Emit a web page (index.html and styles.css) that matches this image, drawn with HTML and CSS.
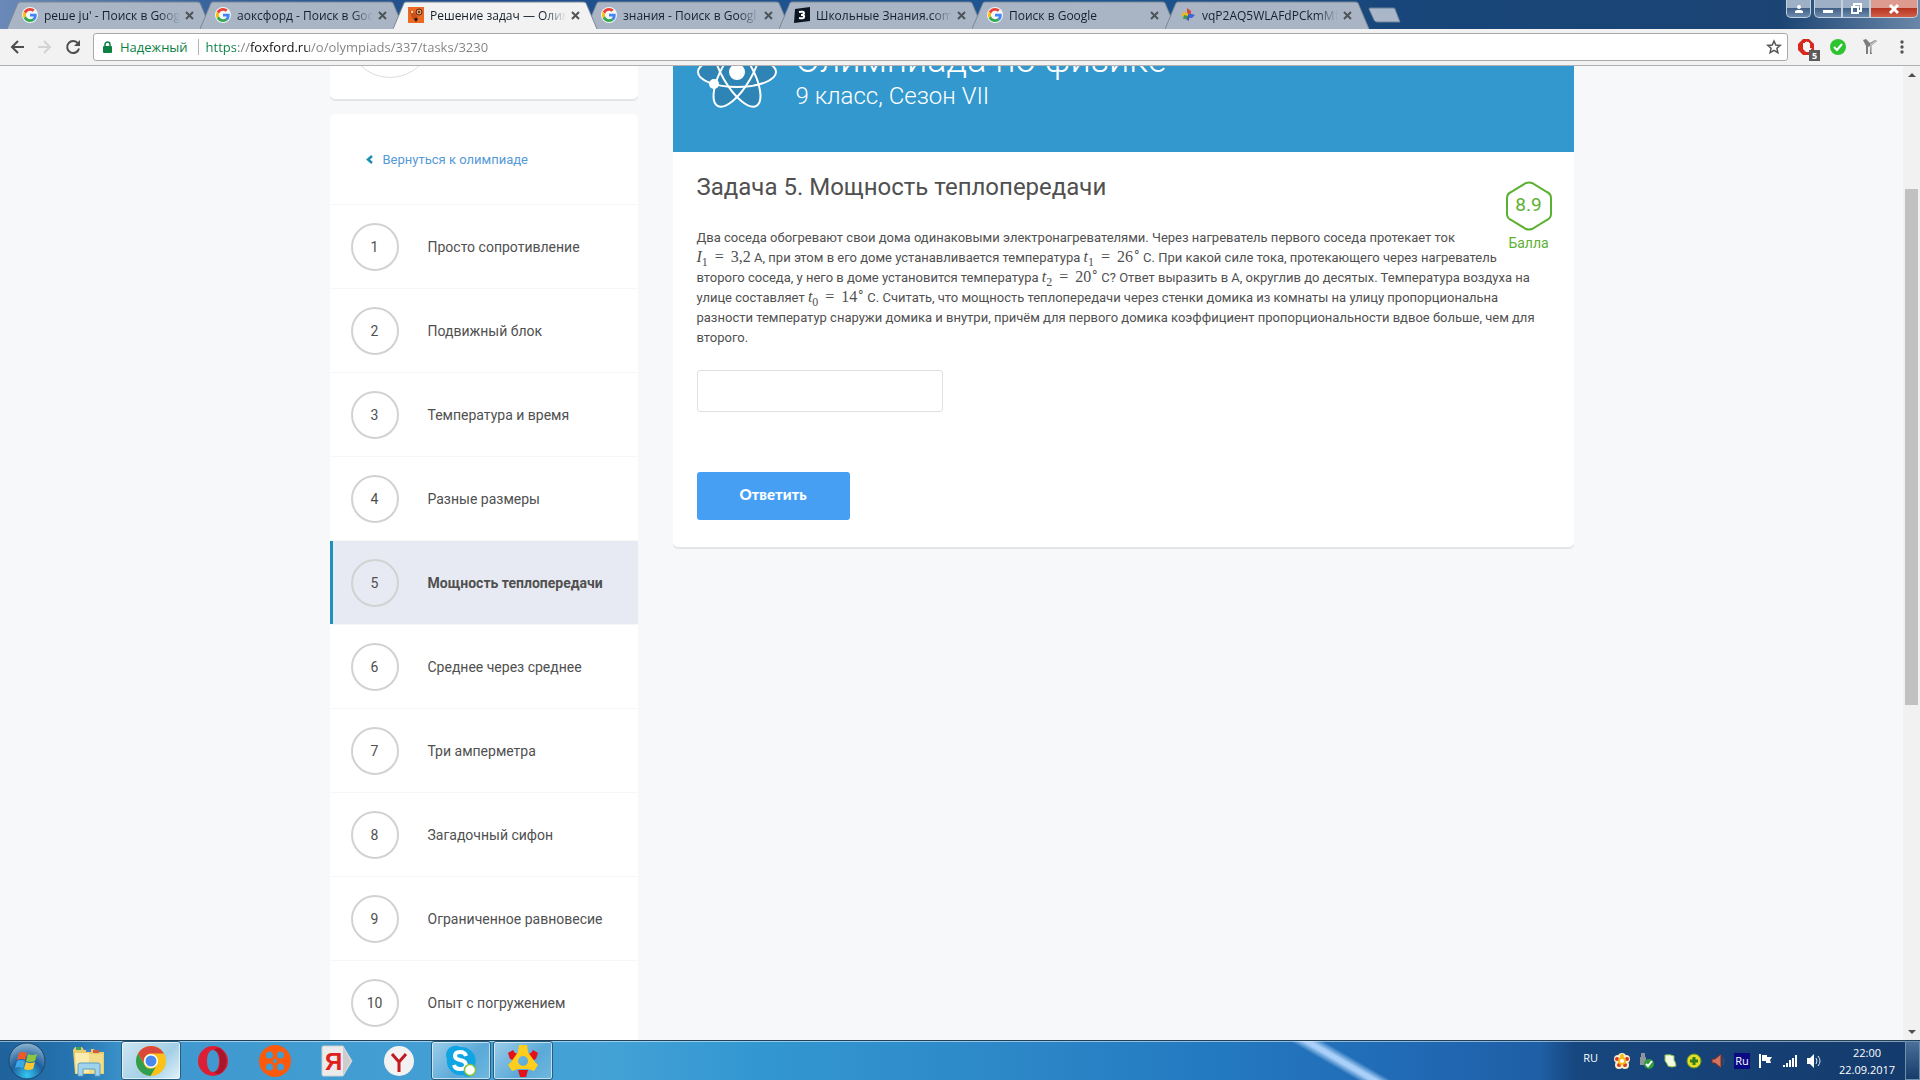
FILE: index.html
```html
<!DOCTYPE html>
<html lang="ru">
<head>
  <meta charset="UTF-8" />
  <meta name="viewport" content="width=device-width, initial-scale=1.0"/>
  <title>Решение задач — Олимпиада по физике</title>
  <link rel="stylesheet" href="styles.css">
</head>
<body>
  <!-- shared shapes -->
  <svg class="defs" aria-hidden="true">
    <symbol id="google" viewBox="0 0 48 48">
      <circle cx="24" cy="24" r="24" fill="#f4f6f8"/>
      <g transform="translate(3 3) scale(.875)">
        <path fill="#ea4335" d="M24 9.500c3.540 0 6.710 1.220 9.210 3.600l6.850-6.850C35.900 2.380 30.470 0 24 0 14.620 0 6.510 5.380 2.560 13.220l7.980 6.190C12.430 13.720 17.740 9.500 24 9.500z"/>
        <path fill="#4285f4" d="M46.980 24.550c0-1.570-.15-3.090-.38-4.550H24v9.020h12.940c-.58 2.960-2.260 5.480-4.780 7.180l7.730 6c4.510-4.180 7.090-10.360 7.090-17.650z"/>
        <path fill="#fbbc05" d="M10.530 28.590c-.48-1.450-.76-2.990-.76-4.590s.27-3.140.76-4.590l-7.980-6.190C.92 16.460 0 20.120 0 24c0 3.880.92 7.540 2.560 10.780l7.970-6.190z"/>
        <path fill="#34a853" d="M24 48c6.480 0 11.930-2.130 15.890-5.810l-7.730-6c-2.150 1.450-4.920 2.300-8.160 2.300-6.260 0-11.570-4.220-13.470-9.910l-7.980 6.190C6.510 42.620 14.620 48 24 48z"/>
      </g>
    </symbol>
    <symbol id="tab-shape" viewBox="0 0 205 28" preserveAspectRatio="none">
      <path d="M0 28 L11 2 Q12 1 13 1 H190 Q192 1 193 2 L204 28" fill="currentColor" stroke="#7b8794"/>
    </symbol>
    <symbol id="cross" viewBox="0 0 9 9">
      <path d="M1 1 8 8M8 1 1 8" stroke="#4f545a" stroke-width="2" fill="none"/>
    </symbol>
    <symbol id="gear" viewBox="0 0 32 32">
      <g fill="#e3121a">
        <path d="M1 8 6 5l2 3 4 1-4 7-5-2z"/><path d="M31 8l-5-3-2 3-4 1 4 7 5-2z"/><path d="M11 25h10l-2 7h-6z"/>
      </g>
      <path fill="#ffcd1c" fill-rule="evenodd" d="M12 0h8l1 7 7 10 3 3-4 6-6-2h-10l-6 2-4-6 3-3 7-10zM16 11a5 5 0 1 0 0 10 5 5 0 0 0 0-10z"/>
    </symbol>
  </svg>

  <header class="titlebar">
    <div class="tabs" role="tablist">
      <div class="tab" role="tab">
        <svg class="tab-bg"><use href="#tab-shape"/></svg>
        <svg class="favicon"><use href="#google"/></svg>
        <span class="tab-title">реше ju' - Поиск в Goog</span>
        <button class="tab-close" aria-label="Закрыть"><svg><use href="#cross"/></svg></button>
      </div>
      <div class="tab" role="tab">
        <svg class="tab-bg"><use href="#tab-shape"/></svg>
        <svg class="favicon"><use href="#google"/></svg>
        <span class="tab-title">аоксфорд - Поиск в Goo</span>
        <button class="tab-close" aria-label="Закрыть"><svg><use href="#cross"/></svg></button>
      </div>
      <div class="tab active" role="tab" aria-selected="true">
        <svg class="tab-bg"><use href="#tab-shape"/></svg>
        <svg class="favicon" viewBox="0 0 16 16">
          <rect width="16" height="16" fill="#ea6a24"/>
          <path d="M1 3l6 3 3 4-2 5-4-4z" fill="#c9501a"/>
          <circle cx="4" cy="5" r="1" fill="#fff"/>
          <circle cx="11" cy="5" r="3" fill="#f09a63" stroke="#4a2a18"/>
          <circle cx="11" cy="5" r="1" fill="#2b1a12"/>
          <path d="M6 12l2 3 2-3-1-1H7z" fill="#2b1a12"/>
        </svg>
        <span class="tab-title">Решение задач — Олим</span>
        <button class="tab-close" aria-label="Закрыть"><svg><use href="#cross"/></svg></button>
      </div>
      <div class="tab" role="tab">
        <svg class="tab-bg"><use href="#tab-shape"/></svg>
        <svg class="favicon"><use href="#google"/></svg>
        <span class="tab-title">знания - Поиск в Googl</span>
        <button class="tab-close" aria-label="Закрыть"><svg><use href="#cross"/></svg></button>
      </div>
      <div class="tab" role="tab">
        <svg class="tab-bg"><use href="#tab-shape"/></svg>
        <svg class="favicon" viewBox="0 0 16 16">
          <path d="M1 2 16 0v14L0 16z" fill="#0b1522"/>
          <path d="M5 5q5-1 5 1 0 2-3 2 4 0 3 2 0 2-5 1" fill="none" stroke="#fff" stroke-width="2"/>
        </svg>
        <span class="tab-title">Школьные Знания.com</span>
        <button class="tab-close" aria-label="Закрыть"><svg><use href="#cross"/></svg></button>
      </div>
      <div class="tab" role="tab">
        <svg class="tab-bg"><use href="#tab-shape"/></svg>
        <svg class="favicon"><use href="#google"/></svg>
        <span class="tab-title">Поиск в Google</span>
        <button class="tab-close" aria-label="Закрыть"><svg><use href="#cross"/></svg></button>
      </div>
      <div class="tab" role="tab">
        <svg class="tab-bg"><use href="#tab-shape"/></svg>
        <svg class="favicon" viewBox="0 0 16 16">
          <path d="M7 1l4 3v4H7z" fill="#d8453a"/><path d="M15 8l-3 3H8V7h4z" fill="#3c68d8"/>
          <path d="M9 14l-3-2-1-4h4z" fill="#4b46c8"/><path d="M1 9l2-4 5 1v3z" fill="#e8b92b"/>
          <path d="M3 12l1-4 4 1-1 3z" fill="#3f9a4e"/>
        </svg>
        <span class="tab-title">vqP2AQ5WLAFdPCkmMf</span>
        <button class="tab-close" aria-label="Закрыть"><svg><use href="#cross"/></svg></button>
      </div>
    </div>
    <button class="new-tab" aria-label="Новая вкладка">
      <svg viewBox="0 0 34 16"><path d="M1 2Q1 1 2 1H25Q27 1 27 2L32 15H9Q7 15 6 13Z" fill="#a9b7c8" stroke="#6b8099"/></svg>
    </button>
    <div class="window-buttons">
      <button class="win user" aria-label="Пользователь">
        <svg viewBox="0 0 12 12"><circle cx="6" cy="4" r="2" fill="#fff"/><path d="M2 10V8l2-1h4l2 1v2z" fill="#fff"/></svg>
      </button>
      <div class="win-group">
        <button class="win" aria-label="Свернуть">
          <svg viewBox="0 0 12 12"><rect x="1" y="7" width="10" height="3" fill="#fff"/></svg>
        </button>
        <button class="win" aria-label="Восстановить">
          <svg viewBox="0 0 12 12"><path d="M4 3V1h7v7H9M2 4h6v6H2z" fill="none" stroke="#fff" stroke-width="2"/></svg>
        </button>
        <button class="win close" aria-label="Закрыть окно">
          <svg viewBox="0 0 12 12"><path d="M2 2l8 8M10 2 2 10" stroke="#fff" stroke-width="3"/></svg>
        </button>
      </div>
    </div>
  </header>

  <nav class="toolbar">
    <button class="nav-btn" aria-label="Назад">
      <svg viewBox="0 0 16 16"><path d="M15 8H3M9 2 3 8l6 6" fill="none" stroke="#4d4d4d" stroke-width="2"/></svg>
    </button>
    <button class="nav-btn" aria-label="Вперёд" disabled>
      <svg viewBox="0 0 16 16"><path d="M1 8h12M7 2l6 6-6 6" fill="none" stroke="#d3d3d3" stroke-width="2"/></svg>
    </button>
    <button class="nav-btn" aria-label="Обновить">
      <svg viewBox="0 0 16 16"><path d="M13 4.500A6 6 0 1 0 14 9.500" fill="none" stroke="#4d4d4d" stroke-width="2"/><path d="M15 1v6H9z" fill="#4d4d4d"/></svg>
    </button>
    <div class="omnibox">
      <svg class="lock" viewBox="0 0 9 12"><path d="M2 6V3.500a2.500 2.500 0 0 1 5 0V6" fill="none" stroke="#0b8043" stroke-width="1.500"/><rect y="5" width="9" height="7" rx="1" fill="#0b8043"/></svg>
      <label class="secure" for="url">Надежный</label>
      <input class="url" id="url" type="text" value="https://foxford.ru/o/olympiads/337/tasks/3230">
      <button class="star" aria-label="Добавить в закладки">
        <svg viewBox="0 0 16 16"><path d="M8 2l1.800 4 4.400.4-3.300 2.900 1 4.300L8 11.300l-3.900 2.300 1-4.300L1.800 6.400 6.200 6z" fill="none" stroke="#555" stroke-width="1.500"/></svg>
      </button>
    </div>
    <button class="ext" aria-label="Блокировщик">
      <svg viewBox="0 0 16 16"><path d="M5 0h6l5 5v6l-5 5H5l-5-5V5z" fill="#d8281e"/><path d="M5 4v6l3 3h3l3-4-2 0V4h-1v4V3H9v5V2.500H8V8V3H7v5V4z" fill="#f4f4f4"/></svg>
      <span class="ext-badge">5</span>
    </button>
    <button class="ext" aria-label="Проверка">
      <svg viewBox="0 0 16 16"><circle cx="8" cy="8" r="8" fill="#2fc32f"/><path d="M4 8l3 3 5-6" fill="none" stroke="#fff" stroke-width="2"/></svg>
    </button>
    <button class="ext" aria-label="Расширение">
      <svg viewBox="0 0 16 16"><path d="M1 1l3-1 4 4 5-3 2 1-5 4v9H8V7L6 8v7H4V7z" fill="#7c7c7c"/><path d="M8 5l6-4 1 1-5 4v8H9z" fill="#bdbdbd"/></svg>
    </button>
    <button class="ext menu" aria-label="Меню">
      <svg viewBox="0 0 16 16"><circle cx="8" cy="3" r="1.700" fill="#555"/><circle cx="8" cy="8" r="1.700" fill="#555"/><circle cx="8" cy="13" r="1.700" fill="#555"/></svg>
    </button>
  </nav>

  <div class="viewport">
    <div class="page">
      <aside class="sidebar">
        <div class="card profile"><div class="avatar"></div></div>
        <div class="card">
          <a class="back" href="#">
            <svg viewBox="0 0 7 9"><path d="M6 1 2 4.500 6 8" fill="none" stroke="#1c8db5" stroke-width="2.500"/></svg>
            Вернуться к олимпиаде
          </a>
          <ul class="tasks">
            <li><a href="#"><span class="num">1</span>Просто сопротивление</a></li>
            <li><a href="#"><span class="num">2</span>Подвижный блок</a></li>
            <li><a href="#"><span class="num">3</span>Температура и время</a></li>
            <li><a href="#"><span class="num">4</span>Разные размеры</a></li>
            <li class="current"><a href="#"><span class="num">5</span>Мощность теплопередачи</a></li>
            <li><a href="#"><span class="num">6</span>Среднее через среднее</a></li>
            <li><a href="#"><span class="num">7</span>Три амперметра</a></li>
            <li><a href="#"><span class="num">8</span>Загадочный сифон</a></li>
            <li><a href="#"><span class="num">9</span>Ограниченное равновесие</a></li>
            <li><a href="#"><span class="num">10</span>Опыт с погружением</a></li>
          </ul>
        </div>
      </aside>

      <main class="card content">
        <div class="hero">
          <svg class="atom" viewBox="0 0 80 84">
            <g fill="#2d84b5">
              <ellipse cx="40" cy="42" rx="39" ry="15"/>
              <ellipse cx="40" cy="42" rx="39" ry="15" transform="rotate(60 40 42)"/>
              <ellipse cx="40" cy="42" rx="39" ry="15" transform="rotate(120 40 42)"/>
            </g>
            <g fill="none" stroke="#fff" stroke-width="2">
              <ellipse cx="40" cy="42" rx="39" ry="15"/>
              <ellipse cx="40" cy="42" rx="39" ry="15" transform="rotate(60 40 42)"/>
              <ellipse cx="40" cy="42" rx="39" ry="15" transform="rotate(120 40 42)"/>
            </g>
            <circle cx="40" cy="42" r="8" fill="#fff"/>
            <circle cx="17" cy="54" r="5" fill="#fff"/>
          </svg>
          <div class="hero-text">
            <h1>Олимпиада по физике</h1>
            <p>9 класс, Сезон VII</p>
          </div>
        </div>
        <div class="task">
          <div class="score">
            <div class="hexagon">
              <svg viewBox="0 0 46 50"><path d="M20 2q3-1 6 0l15 9q4 2 4 6v16q0 4-4 6l-15 9q-3 1-6 0L5 39q-4-2-4-6V17q0-4 4-6z" fill="none" stroke="#5cb132" stroke-width="2"/></svg>
              <span>8.9</span>
            </div>
            Балла
          </div>
          <h2>Задача 5. Мощность теплопередачи</h2>
          <p class="statement">
            Два соседа обогревают свои дома одинаковыми электронагревателями. Через нагреватель первого соседа протекает ток<br>
            <span class="math"><i>I</i><sub>1</sub> <span class="eq">=</span> 3,2</span> А, при этом в его доме устанавливается температура <span class="math"><i>t</i><sub>1</sub> <span class="eq">=</span> 26<sup>∘</sup></span>С. При какой силе тока, протекающего через нагреватель<br>
            второго соседа, у него в доме установится температура <span class="math"><i>t</i><sub>2</sub> <span class="eq">=</span> 20<sup>∘</sup></span>С? Ответ выразить в А, округлив до десятых. Температура воздуха на<br>
            улице составляет <span class="math"><i>t</i><sub>0</sub> <span class="eq">=</span> 14<sup>∘</sup></span>С. Считать, что мощность теплопередачи через стенки домика из комнаты на улицу пропорциональна<br>
            разности температур снаружи домика и внутри, причём для первого домика коэффициент пропорциональности вдвое больше, чем для<br>
            второго.
          </p>
          <form class="answer">
            <input type="text" aria-label="Ответ">
            <button type="button">Ответить</button>
          </form>
        </div>
      </main>
    </div>
    <div class="scrollbar">
      <svg viewBox="0 0 17 17"><path d="M5 11h8L9 7z" fill="#505050"/></svg>
      <div class="thumb"></div>
      <svg viewBox="0 0 17 17"><path d="M5 7h8l-4 4z" fill="#505050"/></svg>
    </div>
  </div>

  <footer class="taskbar">
    <button class="start" aria-label="Пуск">
      <svg viewBox="0 0 38 38">
        <defs><radialGradient id="orb" cx=".5" cy=".9" r=".9"><stop offset="0" stop-color="#35c8f5"/><stop offset=".5" stop-color="#1d5f9c"/><stop offset="1" stop-color="#8fb6d2"/></radialGradient></defs>
        <circle cx="19" cy="19" r="18" fill="url(#orb)" stroke="#1c4468"/>
        <path d="M11 11q4-2 8 0l-2 7q-4-2-8 0z" fill="#ee5a28"/>
        <path d="M20 12q4 2 9 0l-2 7q-5 2-9 0z" fill="#8cc63f"/>
        <path d="M9 19q4-2 8 0l-2 7q-4-2-8 0z" fill="#3ba9e8"/>
        <path d="M18 20q4 2 9 0l-2 7q-5 2-9 0z" fill="#fdc82f"/>
      </svg>
    </button>
    <div class="apps">
      <button class="app" aria-label="Проводник">
        <svg viewBox="0 0 32 32">
          <path d="M0 5l2-3h7l2 3h2l1-1h7l2 3h8v22H2z" fill="#e8cd6d"/>
          <path d="M2 8h14v20H3z" fill="#f9ecae"/><path d="M16 9h14v19H16z" fill="#f3dd8a"/>
          <path d="M3 2h5v3H3z" fill="#3da35b"/><path d="M13 4h5v3h-5z" fill="#3c7fd0"/><path d="M20 5h6v3h-6z" fill="#d85838"/>
          <path d="M5 31V20q0-2 2-2h18q2 0 2 2v11h-5v-7H10v7z" fill="#9fd3ee" stroke="#5b9fc4"/>
        </svg>
      </button>
      <button class="app open front" aria-label="Chrome">
        <svg viewBox="0 0 32 32">
          <circle cx="16" cy="16" r="15" fill="#fbc116"/>
          <path d="M3 8.500A15 15 0 0 1 29 8.500H16a7.500 7.500 0 0 0-6.500 11z" fill="#d9483b"/>
          <path d="M3 8.500A15 15 0 0 0 15.500 31L22 20a7 7 0 0 1-12.500 0z" fill="#2f9e4f"/>
          <circle cx="16" cy="16" r="7" fill="#fff"/><circle cx="16" cy="16" r="5.500" fill="#4a88ee"/>
        </svg>
      </button>
      <button class="app" aria-label="Opera">
        <svg viewBox="0 0 32 32"><path fill-rule="evenodd" d="M16 1a15 15 0 1 0 0 30 15 15 0 0 0 0-30zM16 5c4 0 6 5 6 11s-2 11-6 11-6-5-6-11 2-11 6-11z" fill="#dc1f35"/><path d="M22 3a15 15 0 0 1 0 26q-3 0-5-2c4-1 6-5 6-11S20 6 17 5q2-2 5-2z" fill="#a9152a"/></svg>
      </button>
      <button class="app" aria-label="Кино">
        <svg viewBox="0 0 32 32"><circle cx="16" cy="16" r="16" fill="#fb5a0d"/><g fill="#3f9fd4"><circle cx="10.500" cy="10" r="3.500"/><circle cx="21.500" cy="10" r="3.500"/><circle cx="10.500" cy="22" r="3.500"/><circle cx="21.500" cy="22" r="3.500"/><circle cx="16" cy="16" r="2"/></g></svg>
      </button>
      <button class="app" aria-label="Яндекс">
        <svg viewBox="0 0 32 32"><path d="M2 1h20l9 15-9 15H2Q1 31 1 29V3q0-2 1-2z" fill="#ebebeb" stroke="#cfcfcf"/><path d="M22 2l8 14-8 14z" fill="#cccccc"/><text x="4" y="25" class="ya">Я</text></svg>
      </button>
      <button class="app" aria-label="Яндекс.Браузер">
        <svg viewBox="0 0 32 32"><circle cx="16" cy="16" r="15" fill="#f2f2f2"/><path d="M9 9l7 8 7-8M16 16v11" fill="none" stroke="#c01920" stroke-width="3"/></svg>
      </button>
      <button class="app open" aria-label="Skype">
        <svg viewBox="0 0 32 32">
          <path d="M9 1a8 8 0 0 1 6 1 14 14 0 0 1 15 18 8 8 0 0 1-12 10A14 14 0 0 1 2 14 9 9 0 0 1 9 1z" fill="#0fa5e4"/>
          <path d="M21 11q-1-4-6-4-5 0-5 4 0 3 5 4 6 1 6 5 0 4-6 4-5 0-6-4" fill="none" stroke="#fff" stroke-width="4"/>
          <circle cx="25" cy="25" r="5.500" fill="#fff" stroke="#83c341" stroke-width="1.500"/>
        </svg>
      </button>
      <button class="app open" aria-label="Агент">
        <svg><use href="#gear"/></svg>
      </button>
    </div>
    <div class="tray">
      <span class="lang">RU</span>
      <svg viewBox="0 0 16 16"><g fill="#f5f0c8"><circle cx="8" cy="4" r="4"/><circle cx="4" cy="6" r="4"/><circle cx="12" cy="6" r="4"/><circle cx="5" cy="12" r="4"/><circle cx="11" cy="12" r="4"/></g><circle cx="8" cy="3" r="2" fill="#f9b91b"/><circle cx="3" cy="6" r="2" fill="#dd3526"/><circle cx="13" cy="6" r="2" fill="#dd3526"/><circle cx="5" cy="12" r="2" fill="#dd3526"/><circle cx="11" cy="12" r="2" fill="#dd3526"/><circle cx="8" cy="8" r="4" fill="#f9b91b"/><circle cx="8" cy="8" r="2" fill="#fff"/></svg>
      <svg viewBox="0 0 16 16"><path d="M3 0h4v4h1v8H2V4h1z" fill="#8d969d"/><circle cx="11" cy="11" r="5" fill="#2f9d3b"/><path d="M8 11l2 2 4-5" fill="none" stroke="#fff" stroke-width="2"/></svg>
      <svg viewBox="0 0 16 16"><path d="M3 2q5-1 9 1v4q2 3 2 6-4 2-8 0-1-3-3-5z" fill="#f3fbe6" stroke="#8dbf4a"/></svg>
      <svg viewBox="0 0 16 16"><circle cx="8" cy="8" r="7" fill="#e9dc28" stroke="#5b9a1f"/><path d="M8 4v8M4 8h8" stroke="#2e7d1d" stroke-width="3"/></svg>
      <svg viewBox="0 0 16 16"><path d="M2 6h3l6-5v14l-6-5H2z" fill="#d4745e" stroke="#70302a"/><path d="M13 4q2 4 0 8" fill="none" stroke="#5c4a57"/></svg>
      <span class="ru">Ru</span>
      <svg viewBox="0 0 16 16"><path d="M2 1v14" stroke="#fff" stroke-width="2"/><path d="M4 2h5v2h5l-2 3 1 3H8V8H4z" fill="#fff"/></svg>
      <svg viewBox="0 0 16 16"><path d="M1 12h2v2H1zM4 10h2v4H4zM7 7h2v7H7zM10 5h2v9h-2zM13 2h2v12h-2z" fill="#fff"/></svg>
      <svg viewBox="0 0 16 16"><path d="M1 5h3l4-4v14l-4-4H1z" fill="#fff"/><path d="M10 5q2 3 0 6M12 3q4 5 0 10" fill="none" stroke="#dfe7f0"/></svg>
      <time class="clock">22:00<br>22.09.2017</time>
      <button class="show-desktop" aria-label="Показать рабочий стол"></button>
    </div>
  </footer>
</body>
</html>
```
FILE: styles.css
```css
:root {
  --ui: "Open Sans", "Noto Sans", sans-serif;
  --page-bg: #f6f8fa;
  --text: #505050;
  --blue: #3398cd;
  --green: #5cb132;
}

* {
  box-sizing: border-box;
}

body {
  margin: 0;
  height: 100vh;
  display: flex;
  flex-direction: column;
  overflow: hidden;
  font-family: Roboto, sans-serif;
  color: var(--text);
}

button {
  padding: 0;
  border: none;
  background: none;
  font: inherit;
  cursor: pointer;
}

svg {
  display: block;
  flex: none;
}

.defs {
  position: absolute;
  width: 0;
  height: 0;
}

/* window title and tabs */
.titlebar {
  height: 29px;
  flex: none;
  display: flex;
  align-items: flex-end;
  padding-left: 7px;
  font-family: var(--ui);
  background: linear-gradient(to right, #6a89b8 0, #3a659f 200px, #1f4f8c 420px, #1d5692 1100px, #18467a 1400px, #1b4473 1780px, #6a87a8 1920px);
}

.tabs {
  display: flex;
  height: 28px;
}

.tab {
  position: relative;
  width: 205px;
  height: 28px;
  margin-right: -12px;
  padding: 0 18px 0 15px;
  display: flex;
  align-items: center;
  color: #a9b5c4;
}

.tab.active {
  color: #f2f2f2;
  z-index: 1;
}

.tab-bg {
  position: absolute;
  inset: 0;
  width: 100%;
  height: 100%;
}

.favicon {
  position: relative;
  width: 16px;
  height: 16px;
}

.tab-title {
  position: relative;
  flex: 1;
  min-width: 0;
  margin-left: 6px;
  white-space: nowrap;
  font-size: 12px;
  color: #16202c;
  -webkit-mask-image: linear-gradient(to right, #000 115px, transparent 136px);
  mask-image: linear-gradient(to right, #000 115px, transparent 136px);
}

.tab-close {
  position: relative;
  margin-left: 4px;
}

.tab-close svg {
  width: 9px;
  height: 9px;
}

.new-tab {
  margin-left: 10px;
  align-self: center;
}

.new-tab svg {
  width: 34px;
  height: 16px;
}

.window-buttons {
  margin-left: auto;
  align-self: flex-start;
  display: flex;
  gap: 3px;
  padding-right: 2px;
}

.win-group {
  display: flex;
}

.win {
  width: 28px;
  height: 18px;
  display: flex;
  align-items: center;
  justify-content: center;
  border: 1px solid #c3d0de;
  border-top: none;
  background: linear-gradient(#9db0c6 0 45%, #3d5c82 45%, #6d8bad);
}

.win svg {
  width: 12px;
  height: 12px;
}

.win.user {
  width: 25px;
  border-radius: 0 0 5px 5px;
}

.win-group .win:first-child {
  border-radius: 0 0 0 5px;
}

.win.close {
  width: 48px;
  border-radius: 0 0 5px 0;
  background: linear-gradient(#dd9a8e 0 45%, #b5301c 45%, #d0604a);
}

/* address bar */
.toolbar {
  height: 37px;
  flex: none;
  display: flex;
  align-items: center;
  padding: 0 10px 0 9px;
  background: #f2f2f2;
  border-bottom: 1px solid #b1afaf;
  font-family: var(--ui);
}

.nav-btn {
  width: 16px;
  margin-right: 12px;
}

.nav-btn svg,
.ext svg,
.star svg {
  width: 16px;
  height: 16px;
}

.omnibox {
  flex: 1;
  height: 28px;
  margin-right: 10px;
  padding: 0 5px 0 9px;
  display: flex;
  align-items: center;
  background: #fff;
  border: 1px solid #a9a9a9;
  border-radius: 3px;
  font-size: 13px;
}

.lock {
  width: 9px;
  height: 12px;
}

.secure {
  margin-left: 8px;
  padding-right: 10px;
  line-height: 16px;
  color: #0b8043;
  border-right: 1px solid #b5b5b5;
}

/* the scheme, host and path are tinted by the gradient */
.url {
  flex: 1;
  margin-left: 7px;
  padding: 0;
  border: none;
  outline: none;
  font: inherit;
  color: transparent;
  background: linear-gradient(to right, #0b8043 0 31px, #808080 31px 44px, #111 44px 102px, #808080 102px);
  -webkit-background-clip: text;
  background-clip: text;
}

.ext {
  position: relative;
  margin-right: 16px;
}

.ext.menu {
  margin: 0;
}

.ext-badge {
  position: absolute;
  left: 11px;
  top: 11px;
  width: 11px;
  background: #5b5b5b;
  color: #fff;
  font-size: 9px;
  line-height: 11px;
  font-weight: 700;
}

/* site */
.viewport {
  flex: 1;
  min-height: 0;
  display: flex;
  background: var(--page-bg);
}

.page {
  flex: 1;
  max-width: 1244px;
  margin: 0 auto;
  display: flex;
  align-items: flex-start;
  gap: 35px;
  height: 100%;
  overflow: hidden;
}

.card {
  background: #fff;
  border-radius: 5px;
  box-shadow: 0 2px 0 #e3e5e8;
}

.sidebar {
  width: 308px;
  flex: none;
}

.profile {
  height: 33px;
  margin-bottom: 15px;
  padding: 0 0 21px 17px;
  display: flex;
  align-items: flex-end;
  overflow: hidden;
  border-radius: 0 0 5px 5px;
}

.avatar {
  flex: none;
  width: 86px;
  height: 86px;
  border: 1px solid #dcdcdc;
  border-radius: 50%;
}

.back {
  display: flex;
  align-items: center;
  gap: 10px;
  height: 90px;
  padding: 0 36px;
  font-size: 13px;
  color: #5599d8;
  text-decoration: none;
}

.back svg {
  width: 7px;
  height: 9px;
}

.tasks {
  list-style: none;
  margin: 0;
  padding: 0;
}

.tasks li {
  border-top: 1px solid #f7f7f8;
}

.tasks a {
  display: flex;
  align-items: center;
  gap: 29px;
  height: 83px;
  padding-left: 18px;
  border-left: 3px solid transparent;
  font-size: 14px;
  color: var(--text);
  text-decoration: none;
}

.tasks .current a {
  background: #e7eaf2;
  border-left-color: #1f92ba;
  font-weight: 700;
}

.num {
  width: 48px;
  height: 48px;
  border: 2px solid #d2d2d3;
  border-radius: 50%;
  line-height: 44px;
  text-align: center;
  font-weight: 400;
}

.content {
  flex: 1;
  min-width: 0;
}

.hero {
  display: flex;
  align-items: flex-end;
  gap: 19px;
  height: 86px;
  padding: 0 24px 38px;
  overflow: hidden;
  background: var(--blue);
  color: #fff;
}

.atom {
  width: 80px;
  height: 84px;
}

.hero-text h1,
.hero-text p {
  margin: 0;
  font-weight: 300;
  white-space: nowrap;
}

.hero-text h1 {
  font-size: 36px;
  line-height: 36px;
}

.hero-text p {
  font-size: 24px;
  line-height: 36px;
}

.task {
  padding: 19px 22px 27px 24px;
}

.score {
  float: right;
  width: 46px;
  margin-top: 10px;
  text-align: center;
  white-space: nowrap;
  font-size: 14px;
  line-height: 24px;
  color: var(--green);
}

.hexagon {
  position: relative;
  height: 50px;
}

.hexagon span {
  position: absolute;
  inset: 0;
  font-size: 19px;
  line-height: 48px;
}

h2 {
  margin: 0 0 25px;
  font-size: 24px;
  line-height: 32px;
  font-weight: 400;
}

.statement {
  margin: 0 0 22px;
  font-size: 13px;
  line-height: 20px;
  white-space: nowrap;
}

.math {
  font-family: "Liberation Serif", serif;
  font-size: 16px;
  line-height: 16px;
}

.math .eq {
  margin: 0 3px;
}

.math sub,
.math sup {
  font-size: 12px;
  line-height: 0;
}

.math sup {
  margin-right: 2px;
}

.answer {
  display: flex;
  flex-direction: column;
  align-items: flex-start;
  gap: 60px;
}

.answer input {
  width: 246px;
  height: 42px;
  padding: 0 12px;
  border: 1px solid #dfe0e1;
  border-radius: 3px;
  font-size: 14px;
}

.answer button {
  width: 153px;
  height: 48px;
  padding-bottom: 4px;
  border-radius: 3px;
  background: #469ff3;
  color: #fff;
  font-family: Lato, sans-serif;
  font-size: 15px;
  font-weight: 900;
}

.scrollbar {
  width: 17px;
  flex: none;
  display: flex;
  flex-direction: column;
  background: #f1f1f1;
}

.scrollbar svg {
  width: 17px;
  height: 17px;
}

.thumb {
  flex: 0 0 53%;
  margin: 106px 2px auto;
  background: #c1c1c1;
}

/* taskbar */
.taskbar {
  height: 40px;
  flex: none;
  display: flex;
  align-items: center;
  border-top: 1px solid #1f4159;
  box-shadow: inset 0 1px 0 rgba(255, 255, 255, 0.5);
  background:
    linear-gradient(30deg, transparent 40%, #a9d0f8 48% 52%, transparent 60%) 1291px 0 / 100px 40px no-repeat,
    linear-gradient(to right, #1f629c 0, #2676b2 80px, #3f98cf 130px, #44a2d6 600px, #3297d1 760px, #2d88c8 1000px, #2379c0 1220px, #2169b4 1420px, #1e5fa6 1540px, #17477f 1575px, #143a6b 1920px);
  font-family: var(--ui);
}

.start {
  margin: 0 25px 0 8px;
}

.start svg {
  width: 38px;
  height: 38px;
}

.apps {
  display: flex;
  gap: 2px;
  height: 100%;
  margin-left: -12px;
}

.app {
  width: 60px;
  display: flex;
  align-items: center;
  justify-content: center;
  border: 1px solid transparent;
  border-radius: 3px;
}

.app.open {
  border-color: #285c7c;
  box-shadow: inset 0 0 0 1px rgba(255, 255, 255, 0.6);
  background: linear-gradient(135deg, #9ccdea, #5aa9d8 60%, #6fb9e0);
}

.app.front {
  background: linear-gradient(135deg, #cfe6f2, #a2cfe6 60%, #e2f2fa);
}

.app svg {
  width: 32px;
  height: 32px;
}

.ya {
  font: bold 24px "Liberation Sans", sans-serif;
  fill: #e02020;
}

.tray {
  margin-left: auto;
  height: 100%;
  display: flex;
  align-items: center;
  gap: 8px;
  color: #fff;
}

.tray svg {
  width: 16px;
  height: 16px;
}

.lang {
  margin-right: 8px;
  padding-bottom: 6px;
  font-size: 11px;
}

.ru {
  width: 16px;
  background: #0a0a84;
  font-size: 11px;
  line-height: 16px;
  text-align: center;
}

.clock {
  width: 60px;
  font-size: 11px;
  line-height: 17px;
  text-align: center;
  margin-left: 7px;
}

.show-desktop {
  width: 15px;
  height: 100%;
  border: 1px solid #6d8fb0;
  background: linear-gradient(#4a6f9a, #173c69);
}
```
